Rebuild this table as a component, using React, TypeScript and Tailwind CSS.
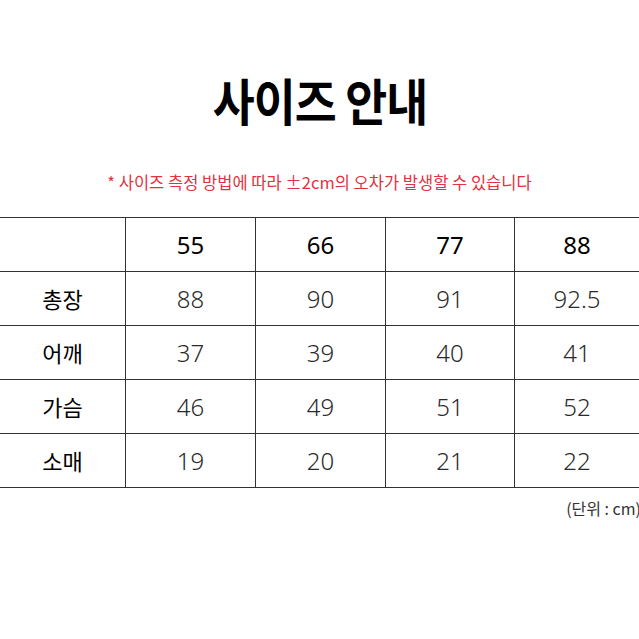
import React from "react";

const FONT = { fontFamily: '"Noto Sans CJK KR", "Noto Sans", sans-serif' };
const DIGITS = { fontFamily: '"Noto Sans", "Noto Sans CJK KR", sans-serif' };

const sizes = ["55", "66", "77", "88"];

const rows: { label: string; values: string[] }[] = [
  { label: "총장", values: ["88", "90", "91", "92.5"] },
  { label: "어깨", values: ["37", "39", "40", "41"] },
  { label: "가슴", values: ["46", "49", "51", "52"] },
  { label: "소매", values: ["19", "20", "21", "22"] },
];

const cols = "grid grid-cols-[125px_130px_130px_129px_1fr]";

const App: React.FC = () => {
  return (
    <div className="w-[639px] h-[639px] bg-white overflow-hidden" style={FONT}>
      {/* Title */}
      <div className="pt-[75px] flex justify-center">
        <h1 className="text-[48px] leading-[48px] font-bold text-black scale-x-[0.95] scale-y-[1.05] tracking-[-0.02em]">
          사이즈 안내
        </h1>
      </div>

      {/* Notice */}
      <p className="mt-[49px] text-center text-[16.5px] leading-[20px] text-[#e2323f]">
        * 사이즈 측정 방법에 따라 ±2cm의 오차가 발생할 수 있습니다
      </p>

      {/* Size table */}
      <div className="mt-[25px] border-b border-[#333]">
        <div className={`${cols} h-[54px] border-t border-[#333]`}>
          <div />
          {sizes.map((s) => (
            <div
              key={s}
              className="flex items-center justify-center border-l border-[#333] text-[24px] font-normal text-black"
              style={DIGITS}
            >
              {s}
            </div>
          ))}
        </div>
        {rows.map((row) => (
          <div key={row.label} className={`${cols} h-[54px] border-t border-[#333]`}>
            <div className="flex items-center justify-center text-[22px] font-normal text-black">
              {row.label}
            </div>
            {row.values.map((v, i) => (
              <div
                key={i}
                className="flex items-center justify-center border-l border-[#333] text-[24px] font-light text-[#2a2a2a]"
                style={DIGITS}
              >
                {v}
              </div>
            ))}
          </div>
        ))}
      </div>

      {/* Unit */}
      <div className="mt-[10px] flex justify-end">
        <span className="text-[16px] leading-[20px] text-[#333] mr-[-2px]">(단위 : cm)</span>
      </div>
    </div>
  );
};

export default App;
